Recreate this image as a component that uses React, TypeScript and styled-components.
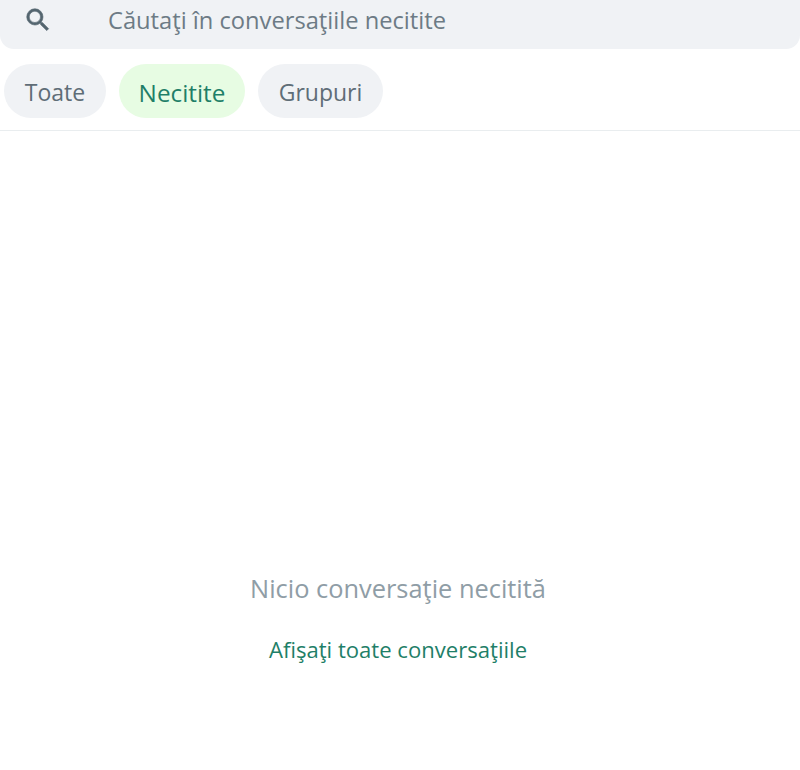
import React from 'react';
import styled, { createGlobalStyle } from 'styled-components';

const Global = createGlobalStyle`
  html, body { margin: 0; padding: 0; background: #fff; }
  body { font-family: "Open Sans", "Noto Sans", sans-serif; }
`;
const Page = styled.div`
  width: 800px; height: 770px; overflow: hidden; display: flex; flex-direction: column; background: #fff;
`;
const SearchBar = styled.div`
  height: 49px; background: #f0f2f5; border-radius: 0 0 14px 14px;
  display: flex; align-items: center; padding: 0 0 10px 23px; box-sizing: border-box;
  color: #54656f;
`;
const SearchText = styled.span`
  margin-left: 55px; font-size: 23.7px; color: #6d7b85;
`;
const Tabs = styled.div`
  display: flex; gap: 13px; padding: 15px 0 12px 4px; border-bottom: 1px solid #e9edef;
`;
const Tab = styled.div<{ $active?: boolean; $width: number }>`
  height: 54px; width: ${p => p.$width}px; box-sizing: border-box; border-radius: 27px; padding-top: 2px;
  display: flex; align-items: center; justify-content: center;
  font-size: ${p => (p.$active ? '24.3px' : '23px')};
  background: ${p => (p.$active ? '#e7fce3' : '#f0f2f5')};
  color: ${p => (p.$active ? '#1f7f68' : '#5f6d77')};
`;
const Empty = styled.div`
  display: flex; flex-direction: column; align-items: center; padding: 440px 0 0 0; margin-left: -4px;
`;
const Title = styled.div`
  font-size: 25.4px; color: #8f9da6; line-height: 34px;
`;
const Link = styled.div`
  font-size: 22.1px; color: #1f7f68; line-height: 30px; margin-top: 29px;
`;
export default function App() {
  return (
    <Page>
      <Global />
      <SearchBar>
        <svg width="30" height="30" viewBox="0 0 24 24" fill="currentColor" stroke="currentColor" strokeWidth="0.5" aria-hidden="true">
          <path d="M15.5 14h-.79l-.28-.27A6.47 6.47 0 0 0 16 9.5 6.5 6.5 0 1 0 9.5 16c1.61 0 3.09-.59 4.23-1.57l.27.28v.79l5 4.99L20.49 19l-4.99-5zm-6 0C7.01 14 5 11.99 5 9.5S7.01 5 9.5 5 14 7.01 14 9.5 11.99 14 9.5 14z" />
        </svg>
        <SearchText>Căutaţi în conversaţiile necitite</SearchText>
      </SearchBar>
      <Tabs>
        <Tab $width={102}>Toate</Tab>
        <Tab $active $width={126}>Necitite</Tab>
        <Tab $width={125}>Grupuri</Tab>
      </Tabs>
      <Empty>
        <Title>Nicio conversaţie necitită</Title>
        <Link>Afişaţi toate conversaţiile</Link>
      </Empty>
    </Page>
  );
}
